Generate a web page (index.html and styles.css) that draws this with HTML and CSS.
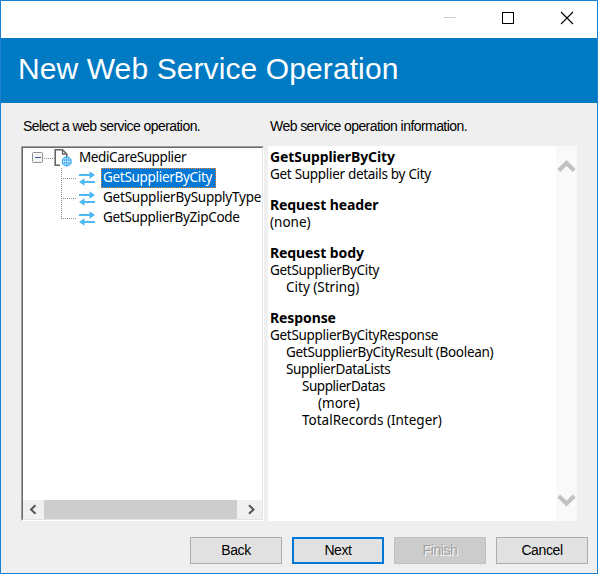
FILE: index.html
```html
<!DOCTYPE html>
<html lang="en">
<head>
<meta charset="utf-8">
<title>New Web Service Operation</title>
<link rel="stylesheet" href="styles.css">
</head>
<body>
<svg width="0" height="0" class="defs">
  <symbol id="branch" viewBox="0 0 46 20"><path d="M31.500 0V20" class="dots"/><path d="M31 10.500H46" class="dots"/></symbol>
  <symbol id="branch-end" viewBox="0 0 46 20"><path d="M31.500 0V11" class="dots"/><path d="M31 10.500H46" class="dots"/></symbol>
  <symbol id="swap" viewBox="0 0 18 20">
    <path d="M1 7H13M5 14H17" fill="none" stroke="#4db8f5" stroke-width="2.200"/>
    <path d="M11.500 3.200L17 7L11.500 10.800ZM6.500 10.200L1 14L6.500 17.800Z" fill="#4db8f5"/>
  </symbol>
</svg>
<div class="window">
  <div class="titlebar">
    <svg width="130" height="16" viewBox="0 0 130 16" fill="none">
      <path d="M1 8.500H13" stroke="#ccc"/>
      <rect x="59.500" y="3.500" width="11" height="11" stroke="#000"/>
      <path d="M118 3L130 15M130 3L118 15" stroke="#000" stroke-width="1.100"/>
    </svg>
  </div>
  <h1 class="banner"><span>New Web Service Operation</span></h1>
  <div class="labels">
    <div class="label-left"><span>Select a web service operation.</span></div>
    <div><span class="label-info">Web service operation information.</span></div>
  </div>
  <div class="panels">
    <div class="tree">
      <div class="tree-rows">
        <div class="row">
          <svg width="53" height="20" viewBox="0 0 53 20">
            <rect x="9.500" y="4.500" width="10" height="10" rx="1" fill="#f4f4f4" stroke="#919191"/>
            <path d="M12 9.500H18" stroke="#3b54a0"/>
            <path d="M21 10.500H30" class="dots"/>
            <path d="M37 17.200H32.200V1.800H39.500L43.800 6V9" fill="none" stroke="#666" stroke-width="1.600"/>
            <path d="M39.500 2V6H43.500" fill="none" stroke="#666" stroke-width="1.300"/>
            <circle cx="43.700" cy="13.500" r="4.500" fill="#e3f3fd" stroke="#3caaf0" stroke-width="1.200"/>
            <path d="M39 12H48.400M39 15H48.400M43.700 9V18" stroke="#3caaf0"/>
            <ellipse cx="43.700" cy="13.500" rx="2.300" ry="4.500" fill="none" stroke="#3caaf0" stroke-width=".8"/>
          </svg><span class="name root">MediCareSupplier</span>
        </div>
        <div class="row">
          <svg class="lines"><use href="#branch"/></svg><svg class="swap"><use href="#swap"/></svg><span class="name selected">GetSupplierByCity</span>
        </div>
        <div class="row">
          <svg class="lines"><use href="#branch"/></svg><svg class="swap"><use href="#swap"/></svg><span class="name long">GetSupplierBySupplyType</span>
        </div>
        <div class="row">
          <svg class="lines"><use href="#branch-end"/></svg><svg class="swap"><use href="#swap"/></svg><span class="name">GetSupplierByZipCode</span>
        </div>
      </div>
      <div class="hscroll">
        <svg width="21" height="19" viewBox="0 0 21 19"><path d="M12.500 5.200L8 9.500L12.500 13.800" fill="none" stroke="#555" stroke-width="2"/></svg>
        <div class="thumb"></div>
        <svg width="25" height="19" viewBox="0 0 25 19"><path d="M12 5.200L16.500 9.500L12 13.800" fill="none" stroke="#555" stroke-width="2"/></svg>
      </div>
    </div>
    <div class="info">
      <div class="details">
        <section><h2>GetSupplierByCity</h2><p>Get Supplier details by City</p></section>
        <section><h2>Request header</h2><p class="wide">(none)</p></section>
        <section><h2>Request body</h2><p>GetSupplierByCity</p><p class="in1 wide">City (String)</p></section>
        <section><h2>Response</h2><p>GetSupplierByCityResponse</p><p class="in1">GetSupplierByCityResult (Boolean)</p><p class="in1 snug">SupplierDataLists</p><p class="in2 tight">SupplierDatas</p><p class="in3 wide">(more)</p><p class="in2 wide">TotalRecords (Integer)</p></section>
      </div>
      <div class="vscroll">
        <svg width="21" height="20" viewBox="0 0 21 20"><path d="M2.800 11.500L10.500 4L18.200 11.500" fill="none" stroke="#c1c1c1" stroke-width="4.200"/></svg>
        <svg width="21" height="20" viewBox="0 0 21 20"><path d="M2.800 6L10.500 13.500L18.200 6" fill="none" stroke="#c1c1c1" stroke-width="4.200"/></svg>
      </div>
    </div>
  </div>
  <div class="buttons">
    <button>Back</button>
    <button class="primary">Next</button>
    <button class="off" disabled>Finish</button>
    <button>Cancel</button>
  </div>
</div>
</body>
</html>
```
FILE: styles.css
```css
* { box-sizing: border-box; }
body { margin: 0; font-family: "Noto Sans", sans-serif; color: #000; }
.defs { position: absolute; }
.window {
  width: 598px; height: 574px; border: 1px solid #1b80d1; background: #efefef;
  display: flex; flex-direction: column;
}
.titlebar {
  height: 37px; flex: none; background: #fff; display: flex;
  justify-content: flex-end; align-items: flex-start; padding: 9px 24px 0 0;
}
.titlebar svg { display: block; overflow: visible; margin-top: -1px; }
.banner {
  margin: 0; height: 65px; flex: none; background: #007ac3; color: #fff;
  padding: 0 0 3px 17px; display: flex; align-items: center;
  font: 400 30px/62px "Liberation Sans", Arial, sans-serif; letter-spacing: .1px;
}
.labels {
  height: 43px; flex: none; padding: 15px 0 0 22px; display: grid;
  grid-template-columns: 247px 1fr;
  font: 14px/16px "Liberation Sans", Arial, sans-serif; letter-spacing: -.56px;
}
.panels { display: flex; gap: 4px; padding-left: 20px; height: 375px; flex: none; }
.tree {
  width: 243px; border: 1px solid; border-color: #a0a0a0 #fff #fff #a0a0a0;
  background: #fff; display: flex; flex-direction: column;
}
.tree-rows {
  flex: 1; border: 1px solid; border-color: #696969 #e3e3e3 #fff #696969;
  border-bottom: 0; overflow: hidden;
}
.row { display: flex; height: 20px; width: 239px; font-size: 13.5px; }
.row svg { flex: none; display: block; }
.row .lines { width: 46px; height: 20px; margin-left: 7px; }
.swap { width: 18px; height: 20px; margin-left: 2px; }
.dots { fill: none; stroke: #8c8c8c; stroke-width: 1; stroke-dasharray: 1 1; }
.name { line-height: 18px; height: 20px; padding: 0 2px; margin-left: 5px; white-space: nowrap; letter-spacing: -.3px; }
.root { margin-left: 1px; letter-spacing: -.38px; }
.long { letter-spacing: -.22px; }
.selected { padding-right: 4px; background: #0078d7; color: #fff; outline: 1px dotted #e8892b; outline-offset: -1px; }
.hscroll {
  height: 20px; display: flex; background: #f0f0f0;
  border-left: 1px solid #696969; border-right: 1px solid #e3e3e3; border-bottom: 1px solid #e3e3e3;
}
.hscroll svg { flex: none; display: block; }
.thumb { flex: 1; background: #cdcdcd; }
.info { width: 309px; display: flex; background: #fff; }
.details { flex: 1; padding: 2px 0 0 2px; display: flex; flex-direction: column; gap: 13px; }
h2, p { margin: 0; font-size: 13.5px; line-height: 17px; font-weight: 400; letter-spacing: -.3px; white-space: nowrap; }
h2 { margin-bottom: 1px; font-size: 14px; font-weight: 700; letter-spacing: -.1px; }
.wide { letter-spacing: 0; }
.snug { letter-spacing: -.38px; }
.tight { letter-spacing: -.45px; }
.in1 { padding-left: 16px; }
.in2 { padding-left: 32px; }
.in3 { padding-left: 48px; }
.vscroll {
  width: 21px; background: #f9f9f9; display: flex; flex-direction: column;
  justify-content: space-between; padding: 13px 0 11px;
}
.buttons { display: flex; justify-content: flex-end; gap: 10px; padding: 16px 9px 0 0; }
button {
  width: 92px; height: 27px; padding: 0; border: 1px solid #adadad; border-radius: 0;
  background: #e1e1e1; color: #000; font: 14px/23px "Liberation Sans", Arial, sans-serif;
  letter-spacing: -.4px;
}
.primary { border: 2px solid #0078d7; }
.off { background: #ccc; border-color: #bfbfbf; color: #a0a0a0; text-shadow: 1px 1px 0 #fff; }
```
